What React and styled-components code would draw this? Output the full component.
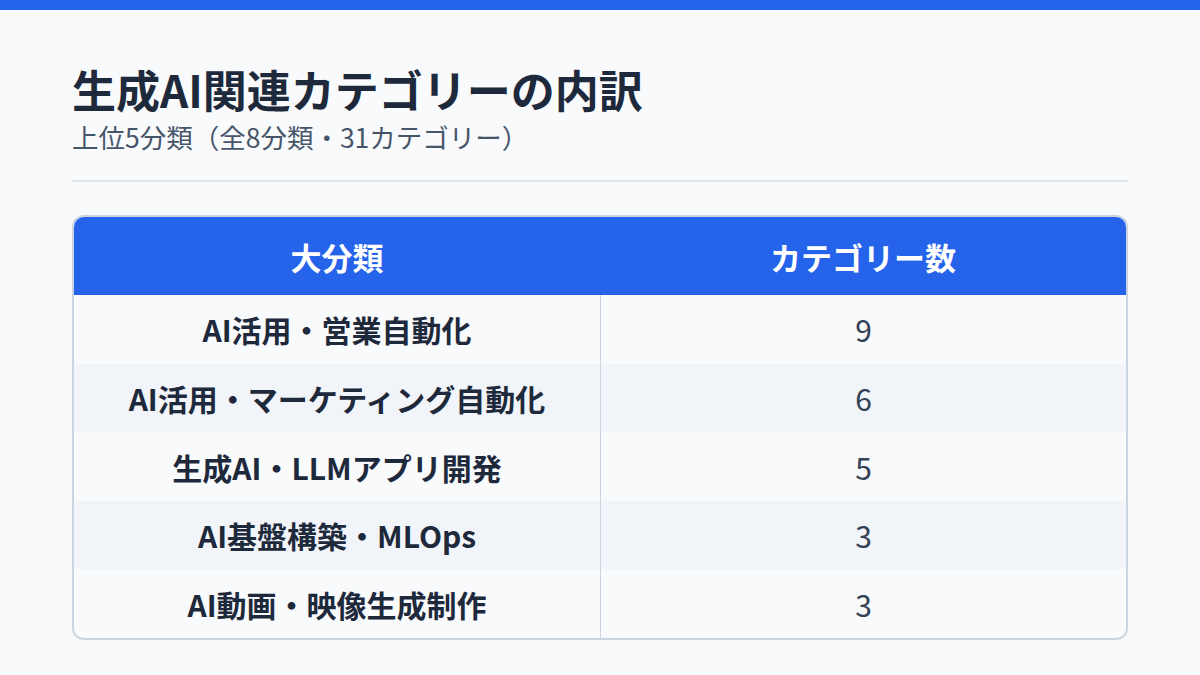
import React from 'react'
import styled, { createGlobalStyle } from 'styled-components'

const GlobalStyle = createGlobalStyle`
  html, body {
    margin: 0;
    padding: 0;
    background: #f8fafc;
  }
  body {
    font-family: "Noto Sans CJK JP", "Noto Sans", sans-serif;
    color: #1e293b;
  }
`

const Page = styled.div`
  width: 1200px;
  height: 675px;
  overflow: hidden;
  background: #f8fafc;
  border-top: 10px solid #2563eb;
  box-sizing: border-box;
  padding: 54px 72px 0;
`

const Title = styled.h1`
  margin: 0;
  font-size: 44px;
  line-height: 1.15;
  font-weight: 700;
  color: #1e293b;
`

const Subtitle = styled.p`
  margin: 5px 0 0;
  font-size: 26.5px;
  line-height: 1.3;
  font-weight: 400;
  color: #475569;
`

const Divider = styled.hr`
  border: 0;
  height: 2px;
  background: #dde3ea;
  margin: 26px 0 33px;
`

const Table = styled.div`
  border: 2px solid #cbd5e1;
  border-radius: 12px;
  overflow: hidden;
  display: grid;
  grid-template-columns: 1fr 1fr;
`

const HeadCell = styled.div`
  height: 78px;
  background: #2563eb;
  color: #fff;
  font-size: 31px;
  font-weight: 700;
  display: flex;
  align-items: center;
  justify-content: center;
`

const Cell = styled.div`
  height: 68.6px;
  display: flex;
  align-items: center;
  justify-content: center;
  background: ${(p) => (p.$alt ? '#f1f5f9' : '#f8fafc')};
  font-size: 30px;
  font-weight: ${(p) => (p.$num ? 400 : 700)};
  color: ${(p) => (p.$num ? '#334155' : '#1e293b')};
  border-left: ${(p) => (p.$num ? '1px solid #cbd5e1' : 'none')};
`

const rows = [
  ['AI活用・営業自動化', 9],
  ['AI活用・マーケティング自動化', 6],
  ['生成AI・LLMアプリ開発', 5],
  ['AI基盤構築・MLOps', 3],
  ['AI動画・映像生成制作', 3],
]

const App = () => {
  return (
    <Page>
      <GlobalStyle />
      <Title>生成AI関連カテゴリーの内訳</Title>
      <Subtitle>上位5分類（全8分類・31カテゴリー）</Subtitle>
      <Divider />
      <Table>
        <HeadCell>大分類</HeadCell>
        <HeadCell>カテゴリー数</HeadCell>
        {rows.map(([name, count], i) => (
          <React.Fragment key={name}>
            <Cell $alt={i % 2 === 1}>{name}</Cell>
            <Cell $alt={i % 2 === 1} $num>
              {count}
            </Cell>
          </React.Fragment>
        ))}
      </Table>
    </Page>
  )
}

export default App
